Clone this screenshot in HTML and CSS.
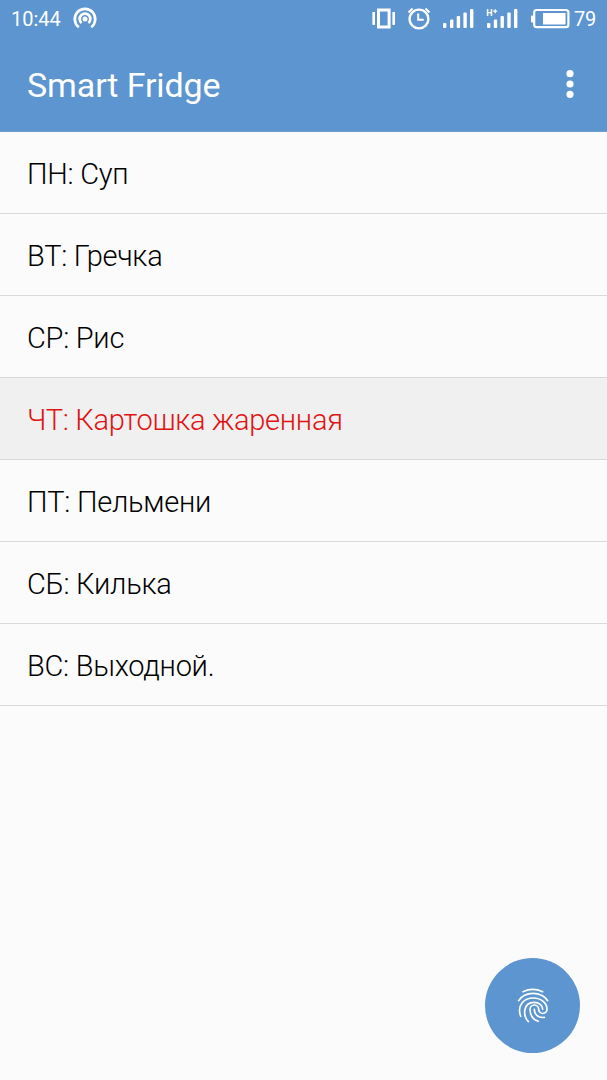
FILE: index.html
```html
<!DOCTYPE html>
<html lang="ru">
<head>
<meta charset="utf-8">
<title>Smart Fridge</title>
<link rel="stylesheet" href="styles.css">
</head>
<body>
<div class="screen">
  <header class="header">
    <div class="status">
      <span class="time">10:44</span>
      <svg class="hotspot" width="24" height="24" viewBox="0 0 24 24" fill="none" stroke="#fff" stroke-width="2.7">
        <circle cx="12" cy="12" r="2.5" fill="#fff" stroke="none"/>
        <path d="M8.6 16A5.3 5.3 0 1 1 15.4 16M5.8 20.2A10.2 10.2 0 1 1 18.2 20.2"/>
      </svg>
      <svg class="indicators" width="202" height="38" viewBox="0 0 202 38" fill="none" stroke="#fff">
        <path d="M1.7 12v13M21.7 12v13" stroke-width="2.6"/>
        <rect x="6.5" y="10" width="10.6" height="17" stroke-width="3"/>
        <circle cx="47" cy="19" r="9.4" stroke-width="2.4"/>
        <path d="M46.2 13.5v6.2h5.5M36.5 12.5l4-4M57.5 12.5l-4-4" stroke-width="2"/>
        <g fill="#fff" stroke="none">
          <rect x="71" y="23" width="3.4" height="5" rx="1"/><rect x="78" y="19.5" width="3.4" height="8.5" rx="1"/><rect x="84.7" y="16" width="3.4" height="12" rx="1"/><rect x="91.4" y="12.5" width="3.4" height="15.5" rx="1"/><rect x="98" y="9" width="3.4" height="19" rx="1"/>
          <rect x="115" y="23" width="3.4" height="5" rx="1"/><rect x="121.8" y="19.5" width="3.4" height="8.5" rx="1"/><rect x="128.5" y="16" width="3.4" height="12" rx="1"/><rect x="135.3" y="12.5" width="3.4" height="15.5" rx="1"/><rect x="142" y="9" width="3.4" height="19" rx="1"/>
          <text x="114.3" y="16.3" class="network">H</text>
          <rect x="159" y="15.5" width="3" height="7" rx="1"/><rect x="171" y="13" width="22.5" height="11.5"/>
        </g>
        <path d="M121.2 11.2h4M123.2 9.2v4" stroke-width="1.3"/>
        <rect x="162.2" y="10" width="34.2" height="17.2" rx="2.5" stroke-width="2.2"/>
      </svg>
      <span class="percent">79</span>
    </div>
    <div class="toolbar">
      <h1 class="title">Smart Fridge</h1>
      <svg class="more" width="8" height="30" viewBox="0 0 8 30" fill="#fff"><circle cx="4" cy="4.7" r="3.6"/><circle cx="4" cy="15" r="3.6"/><circle cx="4" cy="25.3" r="3.6"/></svg>
    </div>
  </header>
  <ul class="days">
    <li class="day">ПН: Суп</li>
    <li class="day">ВТ: Гречка</li>
    <li class="day">СР: Рис</li>
    <li class="day today">ЧТ: Картошка жаренная</li>
    <li class="day">ПТ: Пельмени</li>
    <li class="day">СБ: Килька</li>
    <li class="day">ВС: Выходной.</li>
  </ul>
  <div class="fab">
    <svg width="42" height="42" viewBox="0 0 126 126" fill="none" stroke="#fff" stroke-width="5" stroke-linecap="round">
      <path d="M33 20Q62 6 92 20"/>
      <path d="M20 47C39 18 87 18 107 47"/>
      <path d="M26 94C14 60 36 39 64 39C88 39 105 55 105 73A12.5 12.5 0 0 1 80 73A13 13 0 0 0 54 73C54 92 64 104 79 109"/>
      <path d="M49 110C32 92 33 52 66 52C82 52 92 62 92 73"/>
      <path d="M67 73C67 89 79 100 97 97"/>
    </svg>
  </div>
</div>
</body>
</html>
```
FILE: styles.css
```css
* { box-sizing: border-box; }
body { margin: 0; font-family: Roboto, "Noto Sans", sans-serif; }
.screen { position: relative; width: 607px; height: 1080px; background: #fbfbfb; overflow: hidden; }
.header { height: 132px; background: #5c95cf; border-bottom: 1px solid #6f9fd0; color: #fff; }
.status { display: flex; align-items: center; height: 38px; padding-left: 11px; font-size: 20px; line-height: 38px; }
.time { width: 62px; }
.indicators { margin-left: auto; flex: none; }
.percent { width: 33px; letter-spacing: -0.2px; }
.network { font: 700 9px Roboto, sans-serif; }
.toolbar { display: flex; align-items: center; justify-content: space-between; height: 94px; padding: 0 33px 0 27px; }
.title { margin: 0; font-size: 34px; font-weight: 400; line-height: 40px; letter-spacing: -0.12px; }
.more { margin-top: -2px; }
.days { margin: 0; padding: 0; list-style: none; }
.day { height: 82px; padding-left: 27px; border-bottom: 1px solid #d9d9d9; font-size: 29px; font-weight: 300; line-height: 84px; letter-spacing: -0.27px; color: #000; }
.today { background: #f0f0f0; color: #e01212; }
.fab { position: absolute; right: 27px; bottom: 27px; display: flex; align-items: center; justify-content: center; width: 95px; height: 95px; border-radius: 50%; background: #5c95cf; }
```
